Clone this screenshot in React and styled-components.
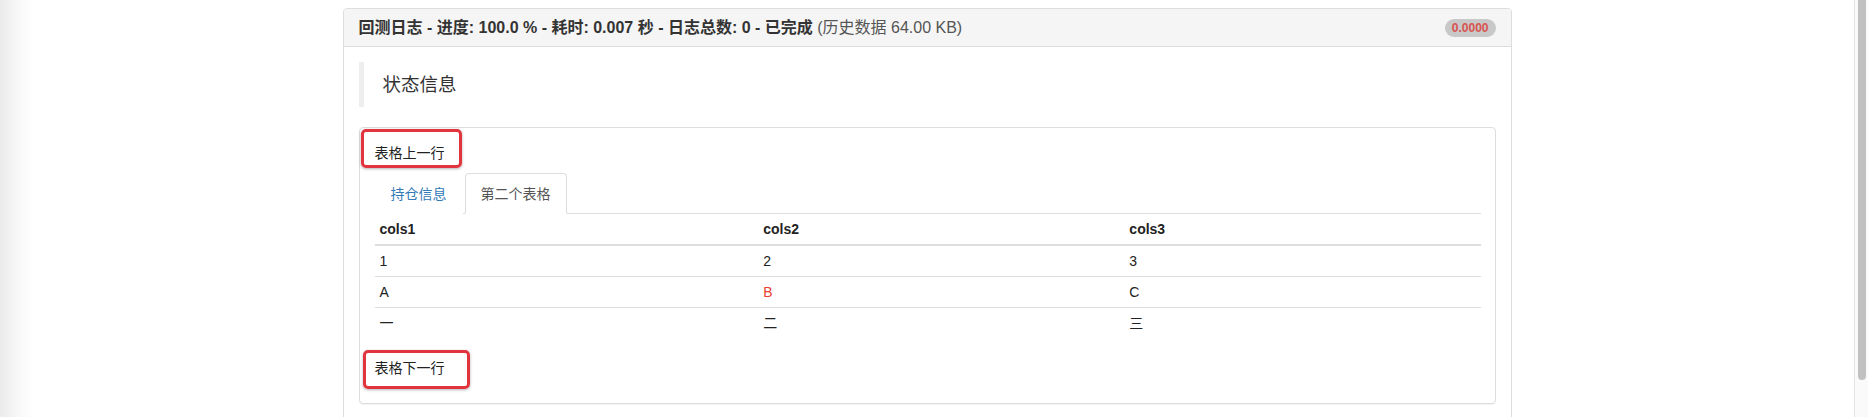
import React from 'react'
import styled, { createGlobalStyle } from 'styled-components'

const GlobalStyle = createGlobalStyle`
  html, body {
    margin: 0;
    padding: 0;
    height: 100%;
    overflow: hidden;
    background: #fff;
  }
  body {
    font-family: "Liberation Sans", "Noto Sans CJK SC", sans-serif;
    font-size: 14px;
    line-height: 20px;
    color: #333;
  }
`

const columns = [
  { name: 'cols1', width: '34.7%' },
  { name: 'cols2', width: '33.1%' },
  { name: 'cols3', width: '32.2%' },
]

const rows = [
  ['1', '2', '3'],
  ['A', { text: 'B', red: true }, 'C'],
  ['一', '二', '三'],
]

const App = () => {
  return (
    <>
      <GlobalStyle />
      <Page>
        <Main>
          <Panel>
            <Heading>
              <Title>
                回测日志 - 进度: 100.0 % - 耗时: 0.007 秒 - 日志总数: 0 - 已完成{' '}
                <Muted>(历史数据 64.00 KB)</Muted>
              </Title>
              <Badge>0.0000</Badge>
            </Heading>
            <Body>
              <Quote>状态信息</Quote>
              <Box>
                <Line>
                  <Callout $t={14} $r={17} $b={5} $l={14}>表格上一行</Callout>
                </Line>
                <Tabs>
                  <Tab>持仓信息</Tab>
                  <Tab $active>第二个表格</Tab>
                </Tabs>
                <Table>
                  <colgroup>
                    {columns.map(c => (
                      <col key={c.name} style={{ width: c.width }} />
                    ))}
                  </colgroup>
                  <thead>
                    <tr>
                      {columns.map(c => (
                        <Th key={c.name}>{c.name}</Th>
                      ))}
                    </tr>
                  </thead>
                  <tbody>
                    {rows.map((r, i) => (
                      <tr key={i}>
                        {r.map((c, j) =>
                          typeof c === 'string' ? (
                            <Td key={j}>{c}</Td>
                          ) : (
                            <Td key={j} $red={c.red}>{c.text}</Td>
                          )
                        )}
                      </tr>
                    ))}
                  </tbody>
                </Table>
                <Line>
                  <Callout $t={8} $r={25} $b={11} $l={12}>表格下一行</Callout>
                </Line>
              </Box>
            </Body>
          </Panel>
        </Main>
        <ScrollTrack>
          <Thumb />
        </ScrollTrack>
      </Page>
    </>
  )
}

export default App

const Page = styled.div`
  display: flex;
  height: 100vh;
  overflow: hidden;
`

const Main = styled.div`
  flex: 1;
  display: flex;
  justify-content: center;
  align-items: flex-start;
  padding-top: 8px;
  background: linear-gradient(to right, #ebebeb 0px, #fafafa 22px, #fff 34px);
`

const Panel = styled.div`
  width: 1167px;
  flex-shrink: 0;
  border: 1px solid #ddd;
  border-radius: 4px;
  background: #fff;
`

const Heading = styled.div`
  display: flex;
  align-items: center;
  justify-content: space-between;
  height: 17px;
  padding: 10px 15px;
  background: #f5f5f5;
  border-bottom: 1px solid #ddd;
  border-radius: 3px 3px 0 0;
`

const Title = styled.div`
  font-size: 16px;
  line-height: 17px;
  font-weight: bold;
  color: #333;
`

const Muted = styled.span`
  font-weight: normal;
  color: #555;
`

const Badge = styled.span`
  display: inline-block;
  padding: 3px 7px;
  font-size: 12px;
  font-weight: bold;
  line-height: 12px;
  color: #d9534f;
  background: #c8c8c8;
  border-radius: 10px;
`

const Body = styled.div`
  padding: 15px;
`

const Quote = styled.div`
  border-left: 5px solid #eee;
  padding: 10px 20px 10px 19px;
  margin: 0 0 20px;
  font-size: 18.5px;
  line-height: 25px;
`

const Box = styled.div`
  border: 1px solid #ddd;
  border-radius: 4px;
  padding: 15px 14px 15px 15px;
  margin-bottom: 20px;
  box-shadow: 0 1px 1px rgba(0, 0, 0, 0.05);
`

const Line = styled.p`
  margin: 0 0 10px;
  color: #222;
`

const Callout = styled.span`
  position: relative;
  display: inline-block;

  &::before {
    content: '';
    position: absolute;
    top: -${p => p.$t}px;
    right: -${p => p.$r}px;
    bottom: -${p => p.$b}px;
    left: -${p => p.$l}px;
    border: 3px solid #e2343f;
    border-radius: 5px;
    box-shadow: 0 1px 3px rgba(0, 0, 0, 0.3);
    pointer-events: none;
  }
`

const Tabs = styled.div`
  display: flex;
  border-bottom: 1px solid #ddd;
`

const Tab = styled.div`
  margin-right: 2px;
  margin-bottom: -1px;
  padding: 10px 15px 9px;
  line-height: 20px;
  border: 1px solid ${p => (p.$active ? '#ddd' : 'transparent')};
  border-bottom-color: ${p => (p.$active ? '#fff' : 'transparent')};
  border-radius: 4px 4px 0 0;
  background: #fff;
  color: ${p => (p.$active ? '#555' : '#337ab7')};
  cursor: pointer;
`

const Table = styled.table`
  width: 100%;
  border-collapse: collapse;
  border-spacing: 0;
  margin-bottom: 20px;
  table-layout: fixed;
`

const Th = styled.th`
  text-align: left;
  padding: 5px;
  line-height: 20px;
  font-weight: bold;
  color: #222;
  border-bottom: 2px solid #ddd;
`

const Td = styled.td`
  padding: 5px;
  line-height: 20px;
  border-top: 1px solid #ddd;
  color: ${p => (p.$red ? '#e8412e' : '#222')};
`

const ScrollTrack = styled.div`
  width: 8px;
  flex-shrink: 0;
  background: #fafafa;
  border-left: 1px solid #e6e6e6;
  padding: 0 2px 0 3px;
`

const Thumb = styled.div`
  height: 380px;
  background: #c1c1c1;
  border-radius: 0 0 5px 5px;
`
